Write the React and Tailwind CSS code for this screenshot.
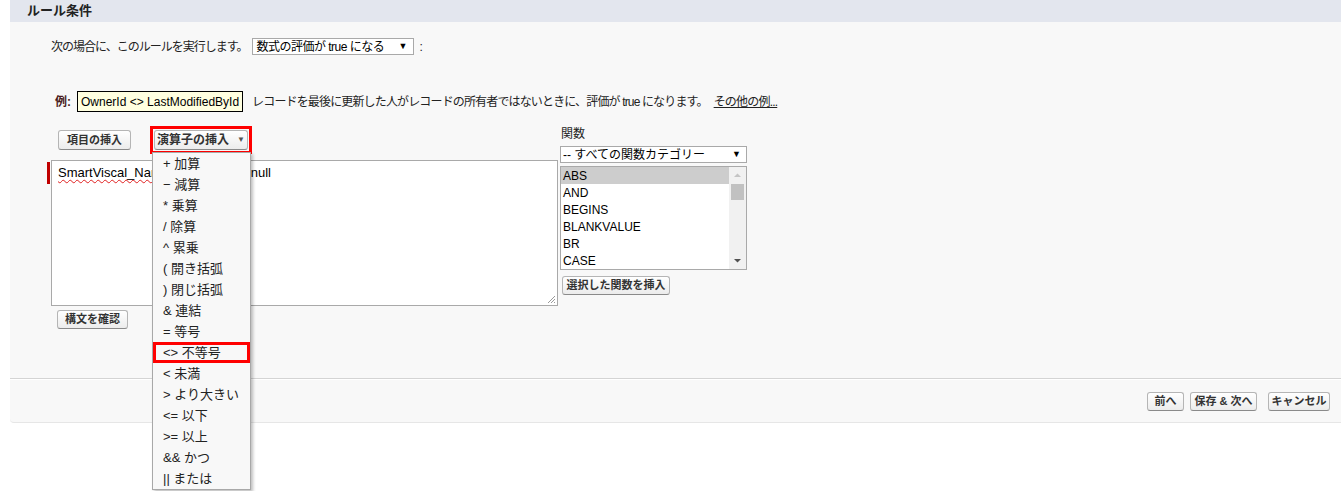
import React from "react"

const font = { fontFamily: '"Liberation Sans", "Noto Sans CJK JP", sans-serif' }

const Btn = ({ children, className = "" }) => (
  <button
    className={
      "flex items-center justify-center whitespace-nowrap rounded-[3px] border border-[#b5b5b5] border-b-[#8a8a8a] bg-[linear-gradient(#ffffff,#ececec)] px-0 font-bold leading-none text-[#333] " +
      className
    }
  >
    {children}
  </button>
)

const operators = [
  "+ 加算",
  "− 減算",
  "* 乗算",
  "/ 除算",
  "^ 累乗",
  "( 開き括弧",
  ") 閉じ括弧",
  "& 連結",
  "= 等号",
  "<> 不等号",
  "< 未満",
  "> より大きい",
  "<= 以下",
  ">= 以上",
  "&& かつ",
  "|| または",
]

const functions = ["ABS", "AND", "BEGINS", "BLANKVALUE", "BR", "CASE"]

const OperatorMenu = () => (
  <div className="absolute -left-[1px] top-[23px] z-10 w-[99px] border border-[#a8a8a8] bg-[#f8f8f8] shadow-[2px_2px_3px_rgba(0,0,0,0.25)]">
    {operators.map((op) => (
      <div key={op} className="flex h-[21px] items-center whitespace-pre text-[13px] leading-none text-[#222]">
        {op === "<> 不等号" ? (
          <div className="flex h-[21px] w-full items-center border-[3px] border-[#ff0000] pl-[7px]">
            {op}
          </div>
        ) : (
          <span className="pl-[10px]">{op}</span>
        )}
      </div>
    ))}
  </div>
)

const FunctionList = () => (
  <div className="flex h-[104px] w-[187px] border border-[#a9a9a9] bg-white">
    <div className="flex-1">
      {functions.map((f, i) => (
        <div
          key={f}
          className={
            "flex h-[17px] items-center pl-[2px] text-[12px] leading-none text-black " +
            (i === 0 ? "bg-[#cdcdcd]" : "")
          }
        >
          {f}
        </div>
      ))}
    </div>
    <div className="flex w-[17px] flex-col items-center bg-[#f1f1f1]">
      <svg width="17" height="17" viewBox="0 0 17 17">
        <path d="M5 10 L8.5 6.5 L12 10 Z" fill="#c4c4c4" />
      </svg>
      <div className="h-[16px] w-[13px] bg-[#c1c1c1]" />
      <div className="flex-1" />
      <svg width="17" height="17" viewBox="0 0 17 17">
        <path d="M5 7 L8.5 10.5 L12 7 Z" fill="#505050" />
      </svg>
    </div>
  </div>
)

export default function App() {
  return (
    <div className="h-[491px] w-[1341px] bg-white text-[#222]" style={font}>
      <div className="ml-[10px] rounded-bl-[4px] border-b border-[#e6e6e6] bg-[#f8f8f8]">
        <div className="flex h-[22px] items-center bg-[#e3e6ee] pl-[17px]">
          <h2 className="text-[13px] font-bold text-[#222]">ルール条件</h2>
        </div>

        <div className="pl-[41px] pt-[16px]">
          <div className="flex h-[17px] items-center text-[12px]">
            <span className="tracking-[-1px]">次の場合に、このルールを実行します。</span>
            <div className="ml-[5px] flex h-[17px] w-[162px] items-center justify-between border border-[#a9a9a9] bg-white pl-[3px] pr-[6px] text-[12px] text-black">
              <span className="tracking-[-0.5px]">数式の評価が true になる</span>
              <span className="text-[9px]">▼</span>
            </div>
            <span className="ml-[5px]">:</span>
          </div>

          <div className="mt-[36px] flex h-[21px] items-center text-[12px]">
            <span className="ml-[4px] font-bold text-[#4a1c1c]">例:</span>
            <div className="ml-[6px] flex h-[21px] items-center border border-black bg-[#ffffe0] px-[3px] text-[12px] text-black">
              OwnerId &lt;&gt; LastModifiedById
            </div>
            <span className="ml-[9px] tracking-[-0.85px]">
              レコードを最後に更新した人がレコードの所有者ではないときに、評価が true になります。
            </span>
            <a className="ml-[6px] underline tracking-[-0.8px]">その他の例...</a>
          </div>

          <div className="mt-[14px] flex">
            <div className="w-[509px]">
              <div className="flex h-[28px] items-center">
                <Btn className="ml-[7px] h-[20px] w-[73px] text-[11px]">項目の挿入</Btn>
                <div className="relative ml-[19px] flex h-[28px] w-[102px] items-center justify-center border-[3px] border-[#ff0000]">
                  <Btn className="h-[20px] w-[94px] gap-[8px] text-[12px]">
                    <span>演算子の挿入</span>
                    <span className="text-[8px] text-[#555]">▼</span>
                  </Btn>
                  <OperatorMenu />
                </div>
              </div>

              <div className="relative mt-[6px] h-[146px] w-[507px] border border-[#a9a9a9] bg-white">
                <div className="absolute -left-[5px] top-[1px] h-[22px] w-[3px] bg-[#c00000]" />
                <div className="whitespace-pre pl-[6px] pt-[2px] text-[13px] text-black">
                  <span className="underline decoration-[#e02020] decoration-wavy decoration-1 underline-offset-2">
                    SmartViscal_Name_Num__c
                  </span>
                  {"  <> null"}
                </div>
                <svg className="absolute bottom-[1px] right-[1px]" width="10" height="10" viewBox="0 0 10 10">
                  <path d="M9 2 L2 9 M9 5 L5 9 M9 8 L8 9" stroke="#9a9a9a" strokeWidth="1" />
                </svg>
              </div>

              <Btn className="ml-[6px] mt-[4px] h-[19px] w-[71px] text-[11px]">構文を確認</Btn>
            </div>

            <div className="pt-[1px]">
              <div className="text-[12px] leading-[14px] pl-[1px]">関数</div>
              <div className="mt-[5px] flex h-[17px] w-[187px] items-center justify-between border border-[#a9a9a9] bg-white pl-[2px] pr-[5px] text-[12px] text-black">
                <span>-- すべての関数カテゴリー</span>
                <span className="text-[9px]">▼</span>
              </div>
              <div className="mt-[3px]">
                <FunctionList />
              </div>
              <Btn className="ml-[2px] mt-[6px] h-[19px] w-[108px] text-[11px]">選択した関数を挿入</Btn>
            </div>
          </div>
        </div>

        <div className="mt-[49px] border-t border-[#d4d4d4]" />
        <div className="flex h-[43px] items-center justify-end border-t border-white pr-[11px]">
          <Btn className="h-[19px] w-[37px] text-[11px]">前へ</Btn>
          <Btn className="ml-[6px] h-[19px] w-[67px] text-[11px]">保存 &amp; 次へ</Btn>
          <Btn className="ml-[11px] h-[19px] w-[62px] text-[11px]">キャンセル</Btn>
        </div>
      </div>
    </div>
  )
}
